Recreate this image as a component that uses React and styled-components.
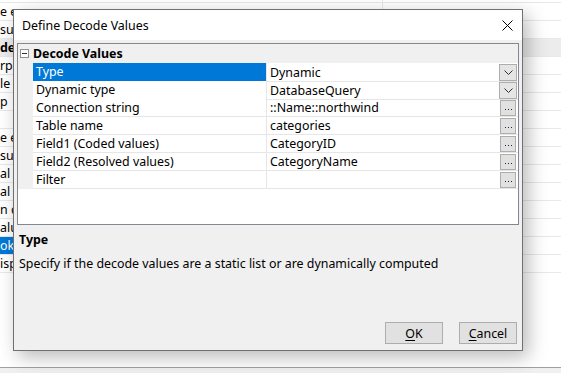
import React from "react";
import styled, { createGlobalStyle } from "styled-components";

const GlobalStyle = createGlobalStyle`
  html, body { margin: 0; padding: 0; background: #ffffff; }
  body { font-family: "Noto Sans", "Liberation Sans", sans-serif; font-size: 12.4px; color: #000; }
  * { box-sizing: border-box; }
`;

const UI_FONT = `"Noto Sans", "Liberation Sans", sans-serif`;

const Page = styled.div`
  position: relative;
  width: 561px;
  height: 373px;
  overflow: hidden;
  background: #ffffff;
  display: flex;
  flex-direction: column;
  font-family: ${UI_FONT};
  font-size: 12.4px;
`;

const BgGrid = styled.div`
  margin-top: -15px;
  display: flex;
  flex-direction: column;
`;

const BgRow = styled.div`
  height: 18px;
  display: grid;
  grid-template-columns: 383px 1fr;
  border-bottom: 1px solid #e8e8e8;
  background: ${(p) => (p.$category ? "#ececec" : "#ffffff")};
`;

const BgLabel = styled.div`
  border-right: 1px solid #e8e8e8;
  line-height: 17px;
  white-space: nowrap;
  font-weight: ${(p) => (p.$category ? 700 : 400)};
  background: ${(p) => (p.$selected ? "#0078d7" : "transparent")};
  color: ${(p) => (p.$selected ? "#ffffff" : "#000000")};
`;

const BgValue = styled.div``;

const BgFill = styled.div`
  flex: 1;
`;

const BgStatus = styled.div`
  height: 6px;
  border-top: 1px solid #a0a0a0;
  background: #f0f0f0;
`;

const Dialog = styled.div`
  position: absolute;
  left: 13px;
  top: 9px;
  width: 510px;
  height: 342px;
  border: 1px solid #707070;
  background: #f0f0f0;
  display: flex;
  flex-direction: column;
  box-shadow: 5px 6px 18px rgba(0, 0, 0, 0.28);
`;

const TitleBar = styled.div`
  height: 30px;
  background: #ffffff;
  display: flex;
  align-items: center;
  justify-content: space-between;
  padding-left: 8px;
  padding-right: 9px;
`;

const Title = styled.div`
  color: #000;
`;

const CloseIcon = styled.svg`
  width: 11px;
  height: 11px;
  display: block;
`;

const Body = styled.div`
  flex: 1;
  display: flex;
  flex-direction: column;
  padding: 3px 3px 6px 3px;
`;

const Grid = styled.div`
  height: 182px;
  border: 1px solid #828790;
  background: #ffffff;
  display: flex;
  flex-direction: column;
`;

const CategoryRow = styled.div`
  height: 19px;
  background: #f0f0f0;
  display: flex;
  align-items: center;
  font-weight: 700;
`;

const Toggle = styled.span`
  width: 9px;
  height: 9px;
  margin: 0 4px 0 2px;
  border: 1px solid #919191;
  background: #ffffff;
  position: relative;
  &::after {
    content: "";
    position: absolute;
    left: 1px;
    right: 1px;
    top: 3px;
    height: 1px;
    background: #333;
  }
`;

const PropRow = styled.div`
  height: 18px;
  display: grid;
  grid-template-columns: 15px 234px 1fr;
`;

const Margin = styled.div`
  background: #f0f0f0;
`;

const NameCell = styled.div`
  border-bottom: 1px solid #e6e6e6;
  border-right: 1px solid #e6e6e6;
  padding-left: 3px;
  line-height: 17px;
  white-space: nowrap;
  background: ${(p) => (p.$selected ? "#0078d7" : "#ffffff")};
  color: ${(p) => (p.$selected ? "#ffffff" : "#000000")};
`;

const ValueCell = styled.div`
  border-bottom: 1px solid #e6e6e6;
  display: flex;
  align-items: center;
  justify-content: space-between;
  padding-left: 3px;
  line-height: 17px;
  white-space: nowrap;
`;

const DropButton = styled.div`
  width: 18px;
  height: 17px;
  margin-right: 1px;
  margin-top: 1px;
  border: 1px solid #adadad;
  background: #e5e5e5;
  display: flex;
  align-items: center;
  justify-content: center;
`;

const EllipsisButton = styled.div`
  width: 16px;
  height: 16px;
  margin-right: 2px;
  margin-top: 1px;
  border: 1px solid #adadad;
  background: #e1e1e1;
  display: flex;
  align-items: center;
  justify-content: center;
  gap: 2px;
  padding-top: 2px;
`;

const Dot = styled.span`
  width: 1px;
  height: 1px;
  background: #202050;
`;

const GridFill = styled.div`
  flex: 1;
`;

const DescTitle = styled.div`
  margin-top: 7px;
  padding-left: 2px;
  font-weight: 700;
  line-height: 16px;
`;

const DescText = styled.div`
  margin-top: 8px;
  padding-left: 2px;
  line-height: 16px;
`;

const Buttons = styled.div`
  margin-top: auto;
  display: flex;
  justify-content: flex-end;
  gap: 16px;
  padding-right: 2px;
`;

const Button = styled.button`
  width: 58px;
  height: 22px;
  border: 1px solid #adadad;
  background: #e1e1e1;
  font-family: ${UI_FONT};
  font-size: 12.4px;
  color: #000;
  padding: 0;
  & u { text-decoration: underline; text-underline-offset: 2px; }
`;

const Chevron = () => (
  <svg width="9" height="5" viewBox="0 0 9 5">
    <path d="M0.5 0.5 L4.5 4.5 L8.5 0.5" fill="none" stroke="#333" strokeWidth="1" />
  </svg>
);

const bgRows = [
  { label: "" },
  { label: "e e" },
  { label: "sur" },
  { label: "de", category: true },
  { label: "rpe" },
  { label: "le" },
  { label: "p" },
  { label: "" },
  { label: "e e" },
  { label: "sur" },
  { label: "al s" },
  { label: "al c" },
  { label: "n d" },
  { label: "alu" },
  { label: "ok", selected: true },
  { label: "isp" },
];

const props = [
  { name: "Type", value: "Dynamic", kind: "drop", selected: true },
  { name: "Dynamic type", value: "DatabaseQuery", kind: "drop" },
  { name: "Connection string", value: "::Name::northwind", kind: "more" },
  { name: "Table name", value: "categories", kind: "more" },
  { name: "Field1 (Coded values)", value: "CategoryID", kind: "more" },
  { name: "Field2 (Resolved values)", value: "CategoryName", kind: "more" },
  { name: "Filter", value: "", kind: "more" },
];

export default function App() {
  return (
    <Page>
      <GlobalStyle />
      <BgGrid>
        {bgRows.map((r, i) => (
          <BgRow key={i} $category={r.category}>
            <BgLabel $category={r.category} $selected={r.selected}>{r.label}</BgLabel>
            <BgValue />
          </BgRow>
        ))}
      </BgGrid>
      <BgFill />
      <BgStatus />

      <Dialog>
        <TitleBar>
          <Title>Define Decode Values</Title>
          <CloseIcon viewBox="0 0 11 11">
            <path d="M0.5 0.5 L10.5 10.5 M10.5 0.5 L0.5 10.5" stroke="#000" strokeWidth="1" fill="none" />
          </CloseIcon>
        </TitleBar>
        <Body>
          <Grid>
            <CategoryRow>
              <Toggle />
              Decode Values
            </CategoryRow>
            {props.map((p) => (
              <PropRow key={p.name}>
                <Margin />
                <NameCell $selected={p.selected}>{p.name}</NameCell>
                <ValueCell>
                  <span>{p.value}</span>
                  {p.kind === "drop" ? (
                    <DropButton><Chevron /></DropButton>
                  ) : (
                    <EllipsisButton><Dot /><Dot /><Dot /></EllipsisButton>
                  )}
                </ValueCell>
              </PropRow>
            ))}
            <GridFill />
          </Grid>
          <DescTitle>Type</DescTitle>
          <DescText>Specify if the decode values are a static list or are dynamically computed</DescText>
          <Buttons>
            <Button><u>O</u>K</Button>
            <Button><u>C</u>ancel</Button>
          </Buttons>
        </Body>
      </Dialog>
    </Page>
  );
}
